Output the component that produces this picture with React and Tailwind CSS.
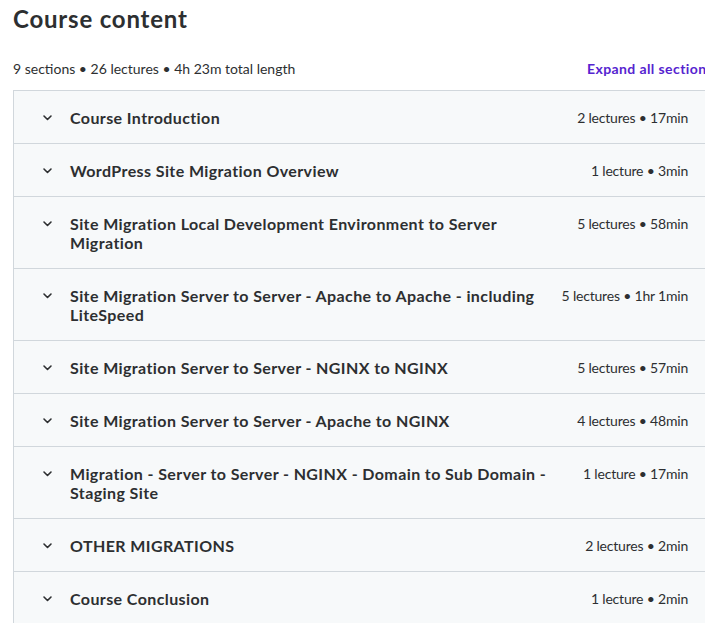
import React from 'react';

const sections = [
  { title: 'Course Introduction', meta: '2 lectures • 17min' },
  { title: 'WordPress Site Migration Overview', meta: '1 lecture • 3min' },
  { title: 'Site Migration Local Development Environment to Server Migration', meta: '5 lectures • 58min' },
  { title: 'Site Migration Server to Server - Apache to Apache - including LiteSpeed', meta: '5 lectures • 1hr 1min' },
  { title: 'Site Migration Server to Server - NGINX to NGINX', meta: '5 lectures • 57min' },
  { title: 'Site Migration Server to Server - Apache to NGINX', meta: '4 lectures • 48min' },
  { title: 'Migration - Server to Server - NGINX - Domain to Sub Domain - Staging Site', meta: '1 lecture • 17min' },
  { title: 'OTHER MIGRATIONS', meta: '2 lectures • 2min' },
  { title: 'Course Conclusion', meta: '1 lecture • 2min' },
];

const Chevron = () => (
  <svg viewBox="0 0 16 16" className="w-4 h-[19px] shrink-0" fill="none" stroke="#2d2f31" strokeWidth="1.6" strokeLinecap="round" strokeLinejoin="round">
    <path d="M6 6.5 9.5 10 13 6.5" />
  </svg>
);

const App = () => {
  return (
    <div className="w-[705px] h-[623px] overflow-hidden bg-white">
      <div className="ml-[13px] w-[700px] text-[#2d2f31] font-['Lato','Inter',sans-serif]">
        {/* Header */}
        <h2 className="mt-1 text-2xl font-bold leading-[29px] tracking-[0.8px]">Course content</h2>
        <div className="mt-[26px] mb-[11px] flex items-center justify-between text-sm leading-5">
          <span>9 sections • 26 lectures • 4h 23m total length</span>
          <button className="font-bold tracking-[0.4px] text-[#5624d0]">Expand all sections</button>
        </div>

        {/* Sections */}
        <div className="border border-[#d1d7dc] border-b-0">
          {sections.map((s) => (
            <div
              key={s.title}
              className="flex items-start gap-4 bg-[#f7f9fa] border-b border-[#d1d7dc] px-6 py-[16.5px]"
            >
              <Chevron />
              <div className="flex-1 flex items-start justify-between gap-4">
                <span className="text-base font-bold leading-[19px] tracking-[0.4px]">{s.title}</span>
                <span className="shrink-0 text-sm leading-[19px] tracking-[-0.2px]">{s.meta}</span>
              </div>
            </div>
          ))}
        </div>
      </div>
    </div>
  );
};

export default App;
